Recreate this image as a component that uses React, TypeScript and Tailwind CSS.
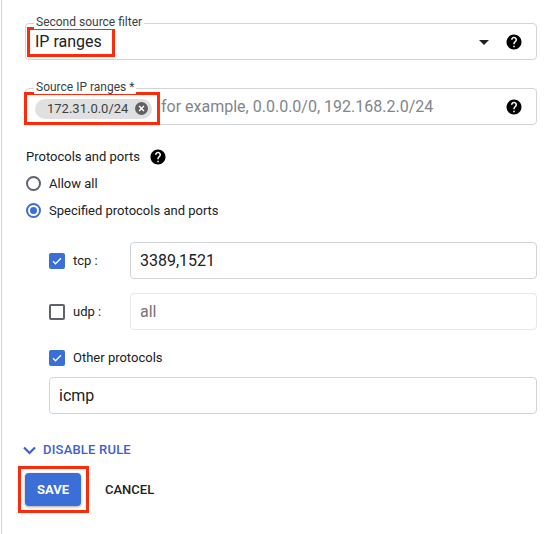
function HelpIcon() {
  return (
    <svg width="18" height="18" viewBox="0 0 24 24" className="shrink-0">
      <path
        fill="#000"
        d="M12 2C6.48 2 2 6.48 2 12s4.48 10 10 10 10-4.48 10-10S17.52 2 12 2zm1 17h-2v-2h2v2zm2.07-7.75l-.9.92C13.450 12.9 13 13.5 13 15h-2v-.5c0-1.1.45-2.1 1.17-2.83l1.24-1.26c.37-.36.59-.86.59-1.41 0-1.1-.9-2-2-2s-2 .9-2 2H8c0-2.21 1.79-4 4-4s4 1.79 4 4c0 .88-.36 1.68-.93 2.25z"
      />
    </svg>
  );
}

function Radio({ checked, label }: { checked?: boolean; label: string }) {
  return (
    <div className="h-[27px] flex items-center">
      <div className="w-[16px] flex justify-center">
        <span
          className={`w-[15px] h-[15px] rounded-full border-2 flex items-center justify-center ${
            checked ? "border-[#3b6fd8]" : "border-[#5f6368]"
          }`}
        >
          {checked && <span className="w-[7px] h-[7px] rounded-full bg-[#3b6fd8]" />}
        </span>
      </div>
      <span className="ml-[8px] text-[13px] text-[#202124]">{label}</span>
    </div>
  );
}

function Checkbox({ checked }: { checked?: boolean }) {
  if (!checked) {
    return <span className="w-[16px] h-[16px] rounded-[2px] border-2 border-[#5f6368] shrink-0" />;
  }
  return (
    <span className="w-[16px] h-[16px] rounded-[2px] bg-[#3b6fd8] flex items-center justify-center shrink-0">
      <svg width="12" height="12" viewBox="0 0 24 24">
        <path d="M4 12.5l5 5L20 6.5" fill="none" stroke="#fff" strokeWidth="2.6" />
      </svg>
    </span>
  );
}

function Field({ label, children }: { label: string; children: React.ReactNode }) {
  return (
    <div className="relative h-[37px] border border-[#d2d4d7] rounded-[4px] flex items-center">
      <span className="absolute left-[8px] top-[-9px] px-[2px] bg-white text-[12px] leading-[14px] text-[#3c4043]">
        {label}
      </span>
      {children}
    </div>
  );
}

export default function App() {
  return (
    <div className="font-['Roboto',sans-serif] bg-white w-[555px] h-[534px] overflow-hidden">
      <div className="ml-px h-full border-l border-[#d6d6d6] pl-[23px] pr-[18px] pt-[23px]">
        <Field label="Second source filter">
          <div className="ml-[1px] h-[30px] w-[88px] border-[3px] border-[#ff2a0a] flex items-center pl-[5px] text-[16px] text-[#202124]">
            IP ranges
          </div>
          <div className="flex-1" />
          <svg width="10" height="10" viewBox="0 0 10 10" className="shrink-0">
            <path d="M0 3h10L5 8z" fill="#202124" />
          </svg>
          <span className="ml-[16px] mr-[13px] flex">
            <HelpIcon />
          </span>
        </Field>

        <div className="mt-[28px]">
          <Field label="Source IP ranges *">
            <div className="ml-[-2px] self-start mt-[3px] h-[33px] w-[136px] shrink-0 border-[3px] border-[#ff2a0a] flex items-center pl-[8px]">
              <div className="h-[20px] w-[117px] rounded-full bg-[#e0e0e0] flex items-center pl-[12px] text-[13px] text-[#3c4043]">
                172.31.0.0/24
                <span className="ml-auto mr-[4px] w-[13px] h-[13px] rounded-full bg-[#616161] flex items-center justify-center">
                  <svg width="7" height="7" viewBox="0 0 10 10">
                    <path d="M1.5 1.5l7 7M8.5 1.5l-7 7" stroke="#fff" strokeWidth="2" />
                  </svg>
                </span>
              </div>
            </div>
            <span className="ml-[1px] text-[16px] text-[#80868b] whitespace-nowrap">
              for example, 0.0.0.0/0, 192.168.2.0/24
            </span>
            <div className="flex-1" />
            <span className="mr-[13px] flex">
              <HelpIcon />
            </span>
          </Field>
        </div>

        <div className="mt-[19px] h-[26px] flex items-center text-[13px] text-[#202124]">
          <span className="ml-[1px]">Protocols and ports</span>
          <span className="ml-[9px] flex">
            <HelpIcon />
          </span>
        </div>
        <Radio label="Allow all" />
        <Radio checked label="Specified protocols and ports" />

        <div className="pl-[24px]">
          <div className="mt-[18px] flex items-center">
            <Checkbox checked />
            <span className="ml-[8px] w-[57px] text-[13px] text-[#202124]">tcp :</span>
            <div className="flex-1 h-[37px] border border-[#d2d4d7] rounded-[4px] flex items-center pl-[9px] text-[16px] text-[#202124]">
              3389,1521
            </div>
          </div>
          <div className="mt-[14px] flex items-center">
            <Checkbox />
            <span className="ml-[8px] w-[57px] text-[13px] text-[#202124]">udp :</span>
            <div className="flex-1 h-[37px] border border-[#e6e7e8] rounded-[4px] flex items-center pl-[9px] text-[16px] text-[#757575]">
              all
            </div>
          </div>
          <div className="mt-[15px] h-[26px] flex items-center">
            <Checkbox checked />
            <span className="ml-[8px] text-[13px] text-[#202124]">Other protocols</span>
          </div>
          <div className="mt-[6px] h-[37px] border border-[#d2d4d7] rounded-[4px] flex items-center pl-[9px] text-[16px] text-[#202124]">
            icmp
          </div>
        </div>

        <div className="mt-[26px] h-[20px] flex items-center text-[#3b62cc]">
          <svg width="13" height="9" viewBox="0 0 13 9" className="ml-[-2px]">
            <path d="M1 1.5l5.5 5.5 5.5-5.5" fill="none" stroke="#3b62cc" strokeWidth="2.2" />
          </svg>
          <span className="ml-[7px] text-[13px] font-medium tracking-[0.2px]">DISABLE RULE</span>
        </div>

        <div className="mt-[6px] flex items-center">
          <div className="ml-[-7px] w-[71px] h-[47px] border-[3px] border-[#ff2a0a] flex items-center pl-[4px]">
            <div className="w-[56px] h-[33px] rounded-[4px] bg-[#3b6ed6] shadow-[0_1px_3px_rgba(0,0,0,0.35)] flex items-center justify-center text-[13px] font-bold text-white">
              SAVE
            </div>
          </div>
          <span className="ml-[16px] text-[13px] font-medium text-[#202124]">CANCEL</span>
        </div>
      </div>
    </div>
  );
}
